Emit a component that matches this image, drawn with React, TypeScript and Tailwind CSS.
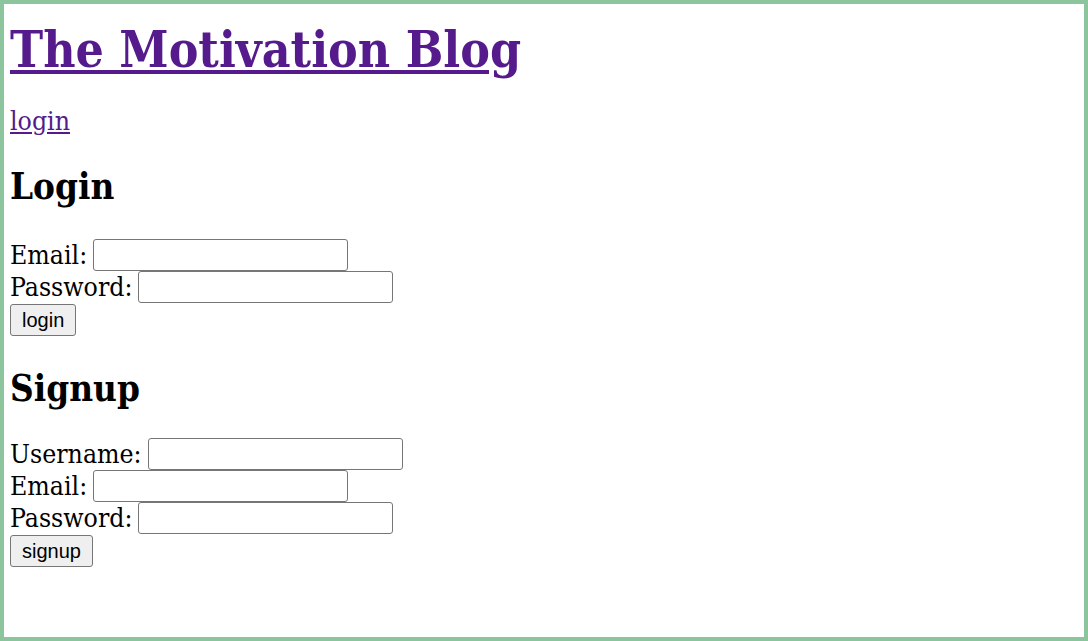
import React from "react"

const serif = "font-['DejaVu_Serif_Condensed','DejaVu_Serif',serif]"

function Field({ label }: { label: string }) {
  return (
    <div className="flex items-center h-8">
      <span className="mr-[6px]">{label}</span>
      <input type="text" className="w-[255px] h-[32px] border border-[#767676] rounded-[3px] bg-white" />
    </div>
  )
}

function Btn({ children }: { children: React.ReactNode }) {
  return (
    <button className="block mt-[1px] h-[32px] px-[11px] border border-[#767676] rounded-[3px] bg-[#efefef] text-[20px] font-['Liberation_Sans',sans-serif] text-black">
      {children}
    </button>
  )
}

export default function App() {
  return (
    <div className={`min-h-[641px] border-4 border-[#8cc49e] px-[6px] text-black text-[26.4px] ${serif}`}>
      <h1 className="mt-[16px] text-[49.5px] font-semibold leading-[60px] text-[#551a8b] underline">
        <a href="#">The Motivation Blog</a>
      </h1>
      <div className="mt-[25px] leading-[32px]">
        <a href="#" className="text-[#551a8b] underline">login</a>
      </div>
      <h2 className="mt-[28px] mb-[30px] text-[36.5px] font-bold leading-[44px]">Login</h2>
      <Field label="Email:" />
      <Field label="Password:" />
      <Btn>login</Btn>
      <h2 className="mt-[31px] mb-[27px] text-[36.5px] font-bold leading-[44px]">Signup</h2>
      <Field label="Username:" />
      <Field label="Email:" />
      <Field label="Password:" />
      <Btn>signup</Btn>
    </div>
  )
}
